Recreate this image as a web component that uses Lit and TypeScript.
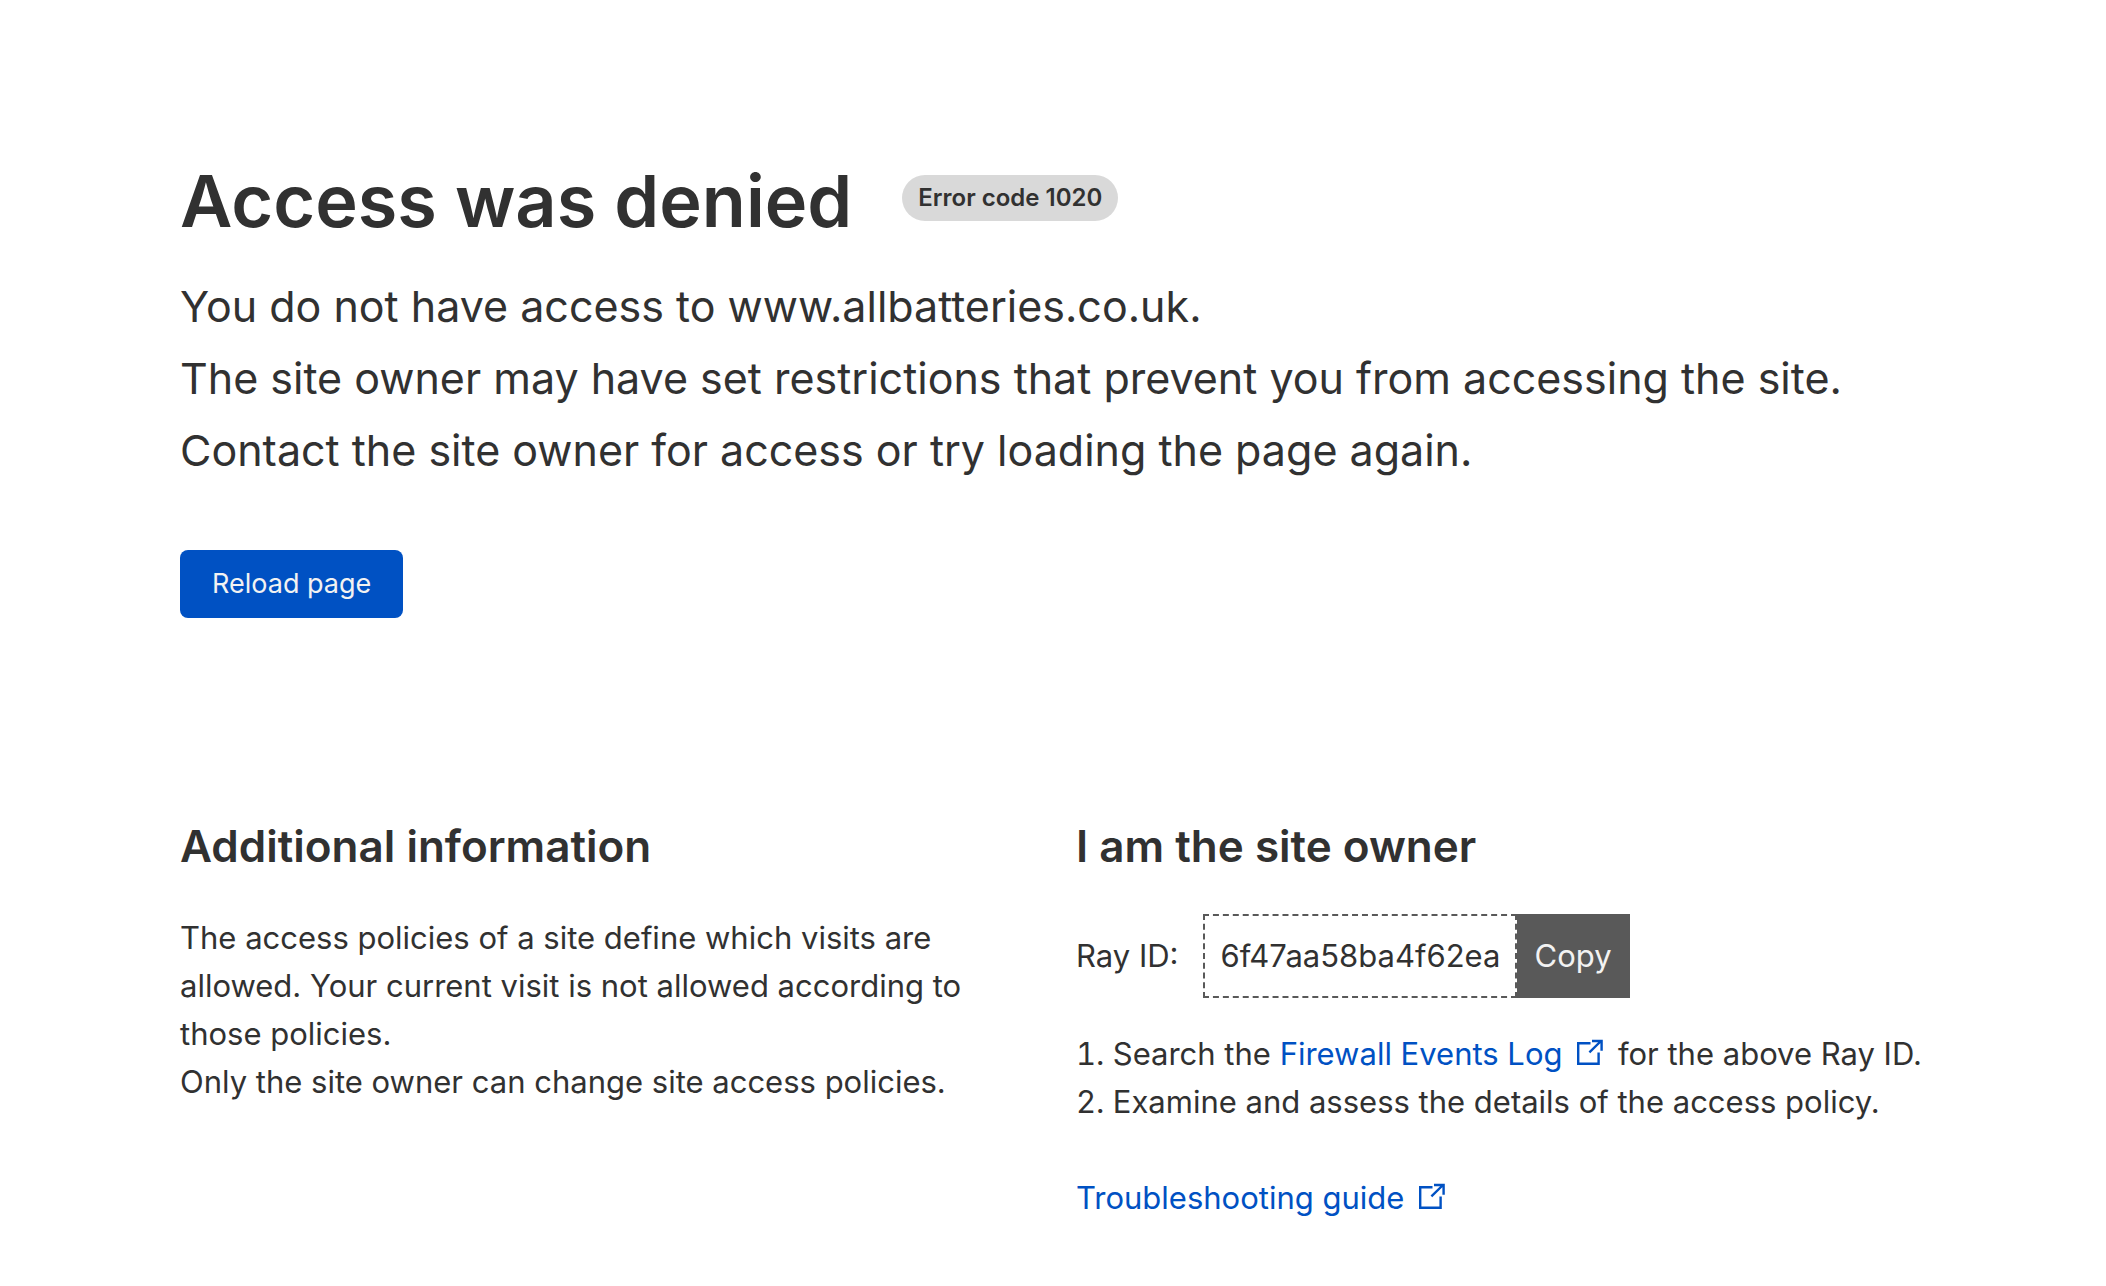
import { LitElement, html, css } from "lit";
import { customElement, property, state } from "lit/decorators.js";

@customElement("external-icon")
class ExternalIcon extends LitElement {
  static styles = css`
    :host {
      display: inline-block;
    }
    .icon {
      display: block;
      width: 26px;
      height: 26px;
      fill: none;
      stroke: currentColor;
      stroke-width: 2.4;
    }
  `;

  render() {
    return html`
      <svg class="icon" viewBox="0 0 26 26" aria-hidden="true">
        <path d="M13.5 4.2H1.2V24.8H21.6V13.5" />
        <path d="M12.4 13.4L24 2M15 2H24.6V11.8" />
      </svg>
    `;
  }
}

@customElement("app-root")
class AppRoot extends LitElement {
  @property() host = "www.allbatteries.co.uk";
  @property() rayId = "6f47aa58ba4f62ea";
  @state() private copied = false;

  static styles = css`
    :host {
      display: block;
      background: #fff;
      color: #313131;
      font-family: Inter, "Liberation Sans", sans-serif;
      font-size: 31px;
      line-height: 48px;
    }
    .page {
      padding: 153px 180px 64px;
    }
    .header {
      display: flex;
      flex-wrap: wrap;
      align-items: flex-start;
      column-gap: 50px;
    }
    .title {
      margin: 0;
      font-size: 72px;
      line-height: 96px;
      font-weight: 600;
    }
    .badge {
      margin-top: 22px;
      padding: 0 16px;
      border-radius: 24px;
      background: #d9d9d9;
      font-size: 24px;
      line-height: 46px;
      font-weight: 600;
    }
    .lead {
      margin: 21px 0 64px;
      font-size: 43px;
      line-height: 72px;
    }
    .line {
      display: block;
    }
    .reload,
    .copy {
      border: 0;
      font: inherit;
      color: #f2f2f2;
      cursor: pointer;
    }
    .reload {
      display: block;
      padding: 10px 32px;
      border-radius: 8px;
      background: #0051c3;
      font-size: 27px;
    }
    .columns {
      display: grid;
      grid-template-columns: 1fr 1fr;
      column-gap: 46px;
      margin-top: 192px;
    }
    .info {
      padding-right: 48px;
    }
    .subtitle {
      margin: 0 0 32px;
      font-size: 44px;
      line-height: 72px;
      font-weight: 600;
    }
    .text {
      margin: 0;
    }
    .ray {
      display: flex;
      align-items: stretch;
    }
    .label {
      align-self: center;
      margin-right: 24px;
    }
    .value {
      box-sizing: border-box;
      width: 314px;
      padding: 16px;
      border: 2px dashed #595959;
      border-radius: 0;
      background: #fff;
      color: inherit;
      font: inherit;
      outline: none;
    }
    .copy {
      padding: 18px;
      background: #595959;
    }
    .steps {
      margin: 32px 0 48px;
      padding: 0;
      list-style-position: inside;
    }
    .link {
      color: #0051c3;
      text-decoration: none;
    }
    .mark {
      margin: 0 6px;
    }
  `;

  private reload() {
    window.location.reload();
  }

  private async copy() {
    await navigator.clipboard?.writeText(this.rayId);
    this.copied = true;
  }

  render() {
    return html`
      <main class="page">
        <header class="header">
          <h1 class="title">Access was denied</h1>
          <span class="badge">Error code 1020</span>
        </header>
        <p class="lead">
          <span class="line">You do not have access to ${this.host}.</span>
          <span class="line">The site owner may have set restrictions that prevent you from accessing the site.</span>
          <span class="line">Contact the site owner for access or try loading the page again.</span>
        </p>
        <button class="reload" type="button" @click=${this.reload}>Reload page</button>
        <div class="columns">
          <section class="info">
            <h2 class="subtitle">Additional information</h2>
            <p class="text">The access policies of a site define which visits are allowed. Your current visit is not allowed according to those policies.</p>
            <p class="text">Only the site owner can change site access policies.</p>
          </section>
          <section class="owner">
            <h2 class="subtitle">I am the site owner</h2>
            <div class="ray">
              <label class="label" for="ray-id">Ray ID:</label>
              <input class="value" id="ray-id" type="text" readonly .value=${this.rayId} />
              <button class="copy" type="button" @click=${this.copy}>${this.copied ? "Copied" : "Copy"}</button>
            </div>
            <ol class="steps">
              <li>Search the <a class="link" href="#firewall">Firewall Events Log <external-icon class="mark"></external-icon></a> for the above Ray ID.</li>
              <li>Examine and assess the details of the access policy.</li>
            </ol>
            <a class="link" href="#guide">Troubleshooting guide <external-icon class="mark"></external-icon></a>
          </section>
        </div>
      </main>
    `;
  }
}
